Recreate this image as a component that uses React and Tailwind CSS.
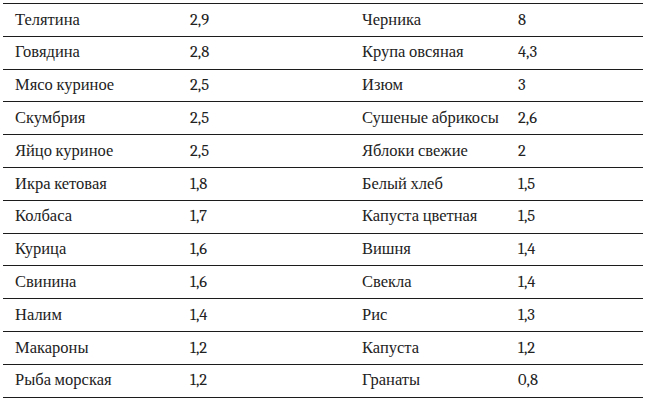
const rows = [
  ["Телятина", "2,9", "Черника", "8"],
  ["Говядина", "2,8", "Крупа овсяная", "4,3"],
  ["Мясо куриное", "2,5", "Изюм", "3"],
  ["Скумбрия", "2,5", "Сушеные абрикосы", "2,6"],
  ["Яйцо куриное", "2,5", "Яблоки свежие", "2"],
  ["Икра кетовая", "1,8", "Белый хлеб", "1,5"],
  ["Колбаса", "1,7", "Капуста цветная", "1,5"],
  ["Курица", "1,6", "Вишня", "1,4"],
  ["Свинина", "1,6", "Свекла", "1,4"],
  ["Налим", "1,4", "Рис", "1,3"],
  ["Макароны", "1,2", "Капуста", "1,2"],
  ["Рыба морская", "1,2", "Гранаты", "0,8"],
]

export default function App() {
  return (
    <div className="w-[646px] h-[400px] bg-white pt-[3px] px-[3px] font-serif text-[16.5px] text-[#222]">
      <div className="border-t border-[#1c1c1c]">
        {rows.map((r, i) => (
          <div
            key={i}
            className="grid grid-cols-[175px_172px_156px_1fr] h-[32.8px] items-center border-b border-[#1c1c1c]"
          >
            {r.map((c, j) => (
              <div key={j} className="pl-3 leading-none">
                {c}
              </div>
            ))}
          </div>
        ))}
      </div>
    </div>
  )
}
